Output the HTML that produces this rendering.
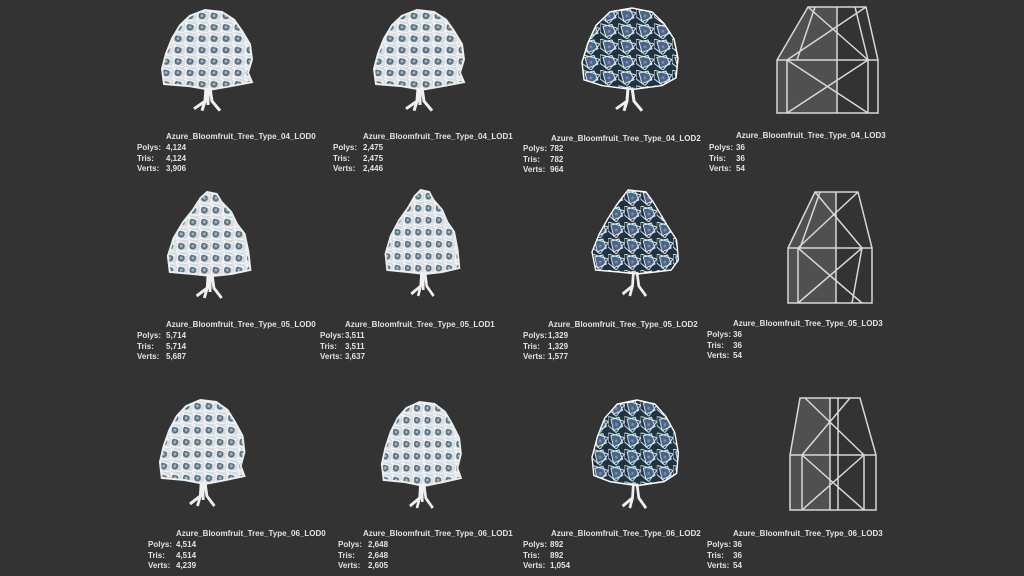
<!DOCTYPE html>
<html><head><meta charset="utf-8"><style>
html,body{margin:0;padding:0;background:#333;width:1024px;height:576px;overflow:hidden;position:relative;font-family:"Liberation Sans",sans-serif}
.t{position:absolute;color:#e2e2e2;font-size:8px;font-weight:bold;line-height:10.5px;white-space:nowrap}
svg{position:absolute;left:0;top:0}
</style></head><body>
<svg width="1024" height="576" viewBox="0 0 1024 576">
<defs>
<pattern id="pl" width="12" height="12" patternUnits="userSpaceOnUse">
<rect width="12" height="12" fill="#d8dde2"/>
<circle cx="6" cy="6" r="3.6" fill="#56707f"/>
<circle cx="6" cy="6" r="1.6" fill="#9fb3c0"/>
<path d="M0 1L12 4M3 0L1 12M0 10L12 12" stroke="#fafafa" stroke-width="1" fill="none"/>
</pattern>
<pattern id="pd" width="18" height="16" patternUnits="userSpaceOnUse">
<rect width="18" height="16" fill="#1f3343"/>
<path d="M3 3L12 1L16 10L6 14Z" fill="#3e6a86"/>
<circle cx="9" cy="8" r="1.5" fill="#b46cc0"/>
<path d="M0 0L18 5L9 16L0 9Z M3 3L12 1L16 10L6 14Z" stroke="#e8ecef" stroke-width="1" fill="none"/>
</pattern>
<g id="tl">
<path d="M45 0L55 2L60 10L70 20L76 32L84 42L88 60L90 78L70 82L50 84L30 82L6 80L4 64L10 46L20 30L30 18L38 6Z" fill="url(#pl)" stroke="#eee" stroke-width="2"/>
<path d="M46 82L45 96L34 104M50 82L52 96L60 106M45 96L42 106M48 84L48 100" stroke="#f0f0f0" stroke-width="3" fill="none"/>
</g>
<g id="tr">
<path d="M30 6L45 0L62 2L74 10L82 22L90 36L92 52L88 66L92 76L72 80L50 84L28 80L4 78L2 62L6 46L12 30L20 16Z" fill="url(#pl)" stroke="#eee" stroke-width="2"/>
<path d="M46 82L45 96L34 104M50 82L52 96L60 106M45 96L42 106M48 84L48 100" stroke="#f0f0f0" stroke-width="3" fill="none"/>
</g>
<g id="td">
<path d="M40 0L60 2L68 12L76 24L84 36L94 50L96 70L88 80L70 82L50 84L30 82L4 80L0 62L8 44L18 28L28 14Z" fill="url(#pd)" stroke="#fff" stroke-width="1.5"/>
<path d="M46 82L45 96L34 104M50 82L52 96L60 106M45 96L42 106" stroke="#f0f0f0" stroke-width="3" fill="none"/>
</g>
<g id="tdr">
<path d="M28 4L50 0L70 4L82 16L92 32L96 52L94 72L80 80L50 84L20 80L2 74L0 56L6 36L14 18Z" fill="url(#pd)" stroke="#fff" stroke-width="1.5"/>
<path d="M46 82L45 96L34 104M50 82L52 96L60 106M45 96L42 106" stroke="#f0f0f0" stroke-width="3" fill="none"/>
</g>
</defs>
<use href="#tr" transform="translate(160,10) scale(1,0.95)"/>
<use href="#tr" transform="translate(372,10) scale(1,0.95)"/>
<use href="#tdr" transform="translate(582,8) scale(1,0.97)"/>
<use href="#tl" transform="translate(164,192) scale(0.96,1)"/>
<use href="#tl" transform="translate(382,190) scale(0.86,1)"/>
<use href="#td" transform="translate(592,190) scale(0.9,1)"/>
<use href="#tr" transform="translate(158,400) scale(0.94,1)"/>
<use href="#tr" transform="translate(380,402) scale(0.88,1)"/>
<use href="#tdr" transform="translate(592,400) scale(0.9,1.02)"/>

<g fill="none" stroke="#d8d8d8" stroke-width="1.5">
<path d="M777 60L808 7L837 7L837 113L777 113Z" fill="#505050" stroke="none"/>
<path d="M777 60L808 7L866 7L878 60L878 113L777 113Z M777 60L878 60 M837 7L837 113 M787 60L787 113 M868 60L868 113 M787 60L868 113 M868 60L787 113 M808 7L868 60 M866 7L787 60 M815 7L797 60 M855 7L868 60"/>
<path d="M788 248L815 192L836 192L836 303L788 303Z" fill="#505050" stroke="none"/>
<path d="M788 248L815 192L858 192L872 248L872 303L788 303Z M788 248L872 248 M836 192L836 303 M798 248L798 303 M862 248L852 303 M798 248L862 303 M862 248L798 303 M815 192L862 248 M858 192L798 248 M820 192L800 248"/>
<path d="M790 455L800 398L830 398L830 510L790 510Z" fill="#505050" stroke="none"/>
<path d="M790 455L800 398L860 398L876 455L876 510L790 510Z M790 455L876 455 M830 398L830 510 M802 455L802 510 M864 455L864 510 M802 455L864 510 M864 455L802 510 M805 398L864 455 M850 398L802 455 M838 398L838 510"/>
</g>
</svg>

<div class="t" style="left:166px;top:132px">Azure_Bloomfruit_Tree_Type_04_LOD0</div>
<div class="t" style="left:137px;top:143px">Polys:<br>Tris:<br>Verts:</div><div class="t" style="left:166px;top:143px">4,124<br>4,124<br>3,906</div>
<div class="t" style="left:363px;top:132px">Azure_Bloomfruit_Tree_Type_04_LOD1</div>
<div class="t" style="left:333px;top:143px">Polys:<br>Tris:<br>Verts:</div><div class="t" style="left:363px;top:143px">2,475<br>2,475<br>2,446</div>
<div class="t" style="left:551px;top:134px">Azure_Bloomfruit_Tree_Type_04_LOD2</div>
<div class="t" style="left:523px;top:144px">Polys:<br>Tris:<br>Verts:</div><div class="t" style="left:550px;top:144px">782<br>782<br>964</div>
<div class="t" style="left:736px;top:131px">Azure_Bloomfruit_Tree_Type_04_LOD3</div>
<div class="t" style="left:709px;top:143px">Polys:<br>Tris:<br>Verts:</div><div class="t" style="left:736px;top:143px">36<br>36<br>54</div>

<div class="t" style="left:166px;top:320px">Azure_Bloomfruit_Tree_Type_05_LOD0</div>
<div class="t" style="left:137px;top:331px">Polys:<br>Tris:<br>Verts:</div><div class="t" style="left:166px;top:331px">5,714<br>5,714<br>5,687</div>
<div class="t" style="left:345px;top:320px">Azure_Bloomfruit_Tree_Type_05_LOD1</div>
<div class="t" style="left:320px;top:331px">Polys:<br>Tris:<br>Verts:</div><div class="t" style="left:345px;top:331px">3,511<br>3,511<br>3,637</div>
<div class="t" style="left:548px;top:320px">Azure_Bloomfruit_Tree_Type_05_LOD2</div>
<div class="t" style="left:523px;top:331px">Polys:<br>Tris:<br>Verts:</div><div class="t" style="left:548px;top:331px">1,329<br>1,329<br>1,577</div>
<div class="t" style="left:733px;top:319px">Azure_Bloomfruit_Tree_Type_05_LOD3</div>
<div class="t" style="left:707px;top:330px">Polys:<br>Tris:<br>Verts:</div><div class="t" style="left:733px;top:330px">36<br>36<br>54</div>

<div class="t" style="left:176px;top:529px">Azure_Bloomfruit_Tree_Type_06_LOD0</div>
<div class="t" style="left:148px;top:540px">Polys:<br>Tris:<br>Verts:</div><div class="t" style="left:176px;top:540px">4,514<br>4,514<br>4,239</div>
<div class="t" style="left:363px;top:529px">Azure_Bloomfruit_Tree_Type_06_LOD1</div>
<div class="t" style="left:338px;top:540px">Polys:<br>Tris:<br>Verts:</div><div class="t" style="left:368px;top:540px">2,648<br>2,648<br>2,605</div>
<div class="t" style="left:551px;top:529px">Azure_Bloomfruit_Tree_Type_06_LOD2</div>
<div class="t" style="left:523px;top:540px">Polys:<br>Tris:<br>Verts:</div><div class="t" style="left:550px;top:540px">892<br>892<br>1,054</div>
<div class="t" style="left:733px;top:529px">Azure_Bloomfruit_Tree_Type_06_LOD3</div>
<div class="t" style="left:707px;top:540px">Polys:<br>Tris:<br>Verts:</div><div class="t" style="left:733px;top:540px">36<br>36<br>54</div>
</body></html>
